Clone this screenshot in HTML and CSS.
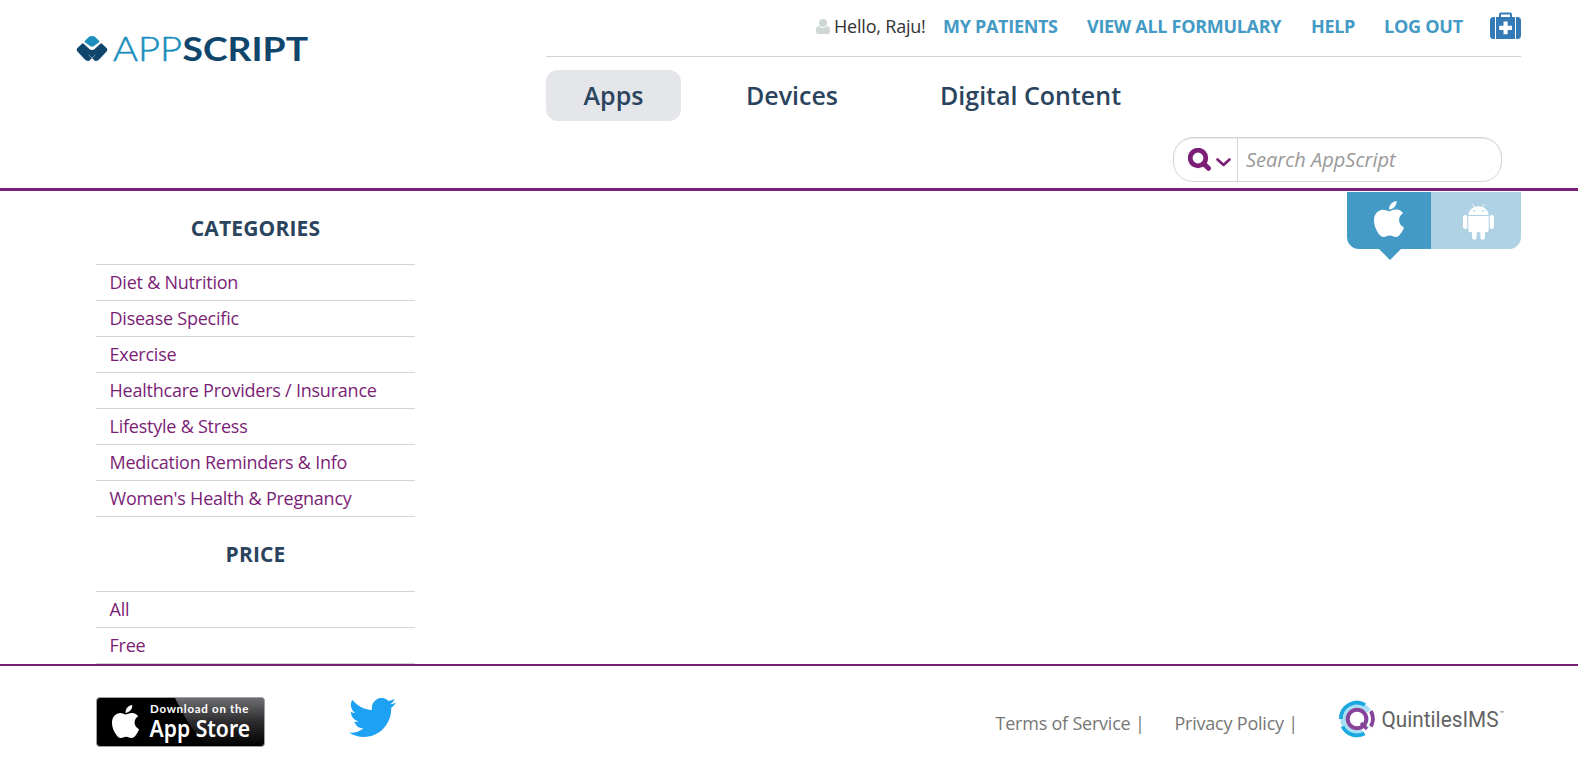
FILE: index.html
```html
<!DOCTYPE html>
<html lang="en">
<head>
<meta charset="utf-8">
<title>AppScript</title>
<link rel="stylesheet" href="styles.css">
</head>
<body>
<header class="header">
  <a class="logo">
    <svg width="240" height="50" viewBox="0 -10 240 50">
      <path fill="#1a8fbd" d="M12.300 3.600Q15 2.200 17.700 3.600L22 7.700q.7.800 0 1.500L17 13q-2 1.500-4 0L8 9.200q-.7-.7 0-1.500z"/>
      <path fill="#10466b" d="M5 10.700q.9-.7 1.700 0l5.600 5.300q2.700 2.200 5.400 0l5.600-5.300q.8-.7 1.700 0l4.800 4.500q1.300 1.500 0 3l-7.700 8.300q-1.500 1.500-4 1.500L15 25l-3.100 3q-2.500 0-4-1.500L.2 18.200q-1.300-1.500 0-3z"/>
      <path fill="none" stroke="#fff" stroke-width=".6" stroke-opacity=".7" d="M11.500 21.800l3.500 3.200 3.500-3.200"/>
      <text class="logo-light" x="36" y="28" textLength="69" lengthAdjust="spacingAndGlyphs">APP</text>
      <text class="logo-bold" x="105.500" y="28" textLength="125.500" lengthAdjust="spacingAndGlyphs">SCRIPT</text>
    </svg>
  </a>
  <div class="header-main">
    <nav class="top-nav">
      <span class="user"><svg width="14" height="15" viewBox="0 0 14 15"><path fill="#cfd6d6" d="M7 0a4 4 0 0 1 4 4 4 4 0 0 1-4 4 4 4 0 0 1-4-4 4 4 0 0 1 4-4zM2.600 7A6 6 0 0 0 7 8.900 6 6 0 0 0 11.400 7C13.500 7.200 14 9.500 14 12.200 14 14 13 15 11.600 15H2.400C1 15 0 14 0 12.200 0 9.500.5 7.200 2.600 7z"/></svg><span class="hello">Hello, Raju!</span></span>
      <a class="top-link patients">MY PATIENTS</a>
      <a class="top-link formulary">VIEW ALL FORMULARY</a>
      <a class="top-link help">HELP</a>
      <a class="top-link logout">LOG OUT</a>
      <svg class="medkit" width="31" height="27" viewBox="0 0 31 27"><path fill="#337ab7" fill-rule="evenodd" d="M6 5h3V2.500Q9 .5 11 .5h9q2 0 2 2V5h3v22H6zM11 5h9V2.500h-9zM13.500 9.500v4.200h-4.300v4.200h4.300v4.300h4.200v-4.300h4.300v-4.200h-4.300V9.500zM5 5v22H3.500Q0 27 0 23.500v-15Q0 5 3.500 5zM26 5h1.500Q31 5 31 8.500v15q0 3.500-3.500 3.500H26z"/></svg>
    </nav>
    <nav class="tabs">
      <a class="tab active">Apps</a>
      <a class="tab devices">Devices</a>
      <a class="tab digital">Digital Content</a>
    </nav>
    <div class="search">
      <div class="search-type">
        <svg width="44" height="24" viewBox="0 0 44 24"><g fill="none" stroke="#7b1e76"><circle cx="10" cy="10" r="7.800" stroke-width="4.800"/><path stroke-width="5" stroke-linecap="round" d="M16 16l4.500 4.300"/><path stroke-width="2.600" stroke-linecap="round" stroke-linejoin="round" d="M29.500 11.500L35.500 17l6-5.500"/></g></svg>
      </div>
      <div class="placeholder">Search AppScript</div>
    </div>
  </div>
</header>
<main class="main">
  <aside class="sidebar">
    <h2 class="heading">CATEGORIES</h2>
    <ul class="list">
      <li>Diet &amp; Nutrition</li>
      <li>Disease Specific</li>
      <li>Exercise</li>
      <li>Healthcare Providers / Insurance</li>
      <li>Lifestyle &amp; Stress</li>
      <li>Medication Reminders &amp; Info</li>
      <li>Women's Health &amp; Pregnancy</li>
    </ul>
    <h2 class="heading price">PRICE</h2>
    <ul class="list">
      <li>All</li>
      <li>Free</li>
    </ul>
  </aside>
  <div class="platforms">
    <div class="platform ios">
      <svg width="30" height="36" viewBox="4 32 376 448" preserveAspectRatio="none"><path fill="#fff" d="M318.700 268.700c-.2-36.700 16.400-64.400 50-84.800-18.800-26.900-47.200-41.700-84.700-44.600-35.500-2.800-74.300 20.700-88.500 20.700-15 0-49.400-19.700-76.400-19.700C63.300 141.200 4 184.800 4 273.500q0 39.300 14.400 81.200c12.800 36.700 59 126.700 107.200 125.200 25.200-.6 43-17.900 75.800-17.900 31.800 0 48.300 17.900 76.400 17.900 48.600-.7 90.400-82.500 102.600-119.300-65.200-30.700-61.700-90-61.700-91.900zm-56.600-164.200c27.300-32.400 24.800-61.900 24-72.500-24.100 1.400-52 16.400-67.900 34.900-17.500 19.800-27.800 44.300-25.600 71.900 26.100 2 49.900-11.400 69.500-34.300z"/></svg>
    </div>
    <div class="platform android">
      <svg width="31" height="36" viewBox="0 0 31 36"><g fill="#fff"><path fill-rule="evenodd" d="M5.300 11C5.500 7.500 7.700 4.700 11 3.200L9.200.3l.7-.3 1.900 2.900a12 12 0 0 1 7.400 0L21.100 0l.7.300L20 3.200c3.300 1.500 5.500 4.300 5.700 7.800zM10.800 6a.9.900 0 1 0 .01 0zM20.200 6a.9.900 0 1 0 .01 0z"/><path d="M5.300 12h20.400v14q0 2.200-2.200 2.200h-1.600v5.400a2.200 2.200 0 0 1-4.500 0v-5.400h-3.800v5.400a2.200 2.200 0 0 1-4.500 0v-5.400H7.500q-2.200 0-2.200-2.200z"/><rect y="11" width="4.300" height="14" rx="2.100"/><rect x="26.700" y="11" width="4.300" height="14" rx="2.100"/></g></svg>
    </div>
  </div>
</main>
<footer class="footer">
  <svg class="badge" width="169" height="50" viewBox="0 0 169 50">
    <defs><linearGradient id="gloss" x1="0" y1="0" x2="0" y2="1"><stop offset="0" stop-color="#6d6e71"/><stop offset=".5" stop-color="#2c2c2e"/><stop offset="1" stop-color="#000"/></linearGradient></defs>
    <rect x=".5" y=".5" width="168" height="49" rx="3.500" fill="#000"/>
    <path fill="url(#gloss)" d="M79 1h86q3 0 3 3v42q0 3-3 3h-54C95 33 87 17 79 1z"/>
    <rect x=".5" y=".5" width="168" height="49" rx="3.500" fill="none" stroke="#a0a1a3"/>
    <svg x="16" y="8" width="27" height="33" viewBox="4 32 376 448" preserveAspectRatio="none"><path fill="#fff" d="M318.700 268.700c-.2-36.700 16.400-64.400 50-84.800-18.800-26.900-47.200-41.700-84.700-44.600-35.500-2.800-74.300 20.700-88.500 20.700-15 0-49.400-19.700-76.400-19.700C63.300 141.200 4 184.800 4 273.500q0 39.300 14.400 81.200c12.800 36.700 59 126.700 107.200 125.200 25.200-.6 43-17.900 75.800-17.900 31.800 0 48.300 17.900 76.400 17.900 48.600-.7 90.400-82.500 102.600-119.300-65.200-30.700-61.700-90-61.700-91.900zm-56.600-164.200c27.300-32.400 24.800-61.900 24-72.500-24.100 1.400-52 16.400-67.900 34.900-17.500 19.800-27.800 44.300-25.600 71.900 26.100 2 49.900-11.400 69.500-34.300z"/></svg>
    <text class="badge-small" x="54" y="16" textLength="98.500">Download on the</text>
    <text class="badge-large" x="53.500" y="39.500" textLength="100.500" lengthAdjust="spacingAndGlyphs">App Store</text>
  </svg>
  <svg class="twitter" width="47" height="39" viewBox="0 2.250 24 19.550" preserveAspectRatio="none"><path fill="#1da1f2" d="M23.953 4.570a10 10 0 01-2.825.775 4.958 4.958 0 002.163-2.723c-.951.555-2.005.959-3.127 1.184a4.920 4.920 0 00-8.384 4.482C7.690 8.095 4.067 6.130 1.640 3.162a4.822 4.822 0 00-.666 2.475c0 1.710.870 3.213 2.188 4.096a4.904 4.904 0 01-2.228-.616v.060a4.923 4.923 0 003.946 4.827 4.996 4.996 0 01-2.212.085 4.936 4.936 0 004.604 3.417 9.867 9.867 0 01-6.102 2.105c-.390 0-.779-.023-1.170-.067a13.995 13.995 0 007.557 2.209c9.053 0 13.998-7.496 13.998-13.985 0-.210 0-.420-.015-.630A9.935 9.935 0 0024 4.590z"/></svg>
  <div class="legal">
    <a class="legal-link">Terms of Service |</a>
    <a class="legal-link privacy">Privacy Policy |</a>
    <svg class="quintiles" width="168" height="38" viewBox="0 0 168 38">
      <g fill="none">
        <circle cx="18" cy="18" r="14" stroke="#a9dff5" stroke-width="5.500"/>
        <path stroke="#fff" stroke-width="8" d="M24.500 31.500a15 15 0 0 0 5-5"/>
        <path stroke="#1ba8e0" stroke-width="3.800" d="M26 3.800A16.200 16.200 0 0 0 1.800 18M3.500 25.500A16.200 16.200 0 0 0 25.500 32.500"/>
        <path stroke="#fff" stroke-width="6" d="M30 10a14.500 14.500 0 0 1 0 16"/>
        <path stroke="#87439a" stroke-width="3.800" d="M31.900 10a16.600 16.600 0 0 1 0 15.500"/>
        <circle cx="18" cy="18" r="9.300" fill="#fff" stroke="#87439a" stroke-width="4"/>
        <path stroke="#87439a" stroke-width="3.200" d="M22 22l6 6"/>
      </g>
      <text class="q-text" x="42.500" y="26" textLength="117" lengthAdjust="spacingAndGlyphs">QuintilesIMS</text>
      <text class="q-tm" x="160.500" y="15">™</text>
    </svg>
  </div>
</footer>
</body>
</html>
```
FILE: styles.css
```css
* { box-sizing: border-box; }
body { margin: 0; background: #fff; font-family: "Open Sans", sans-serif; color: #333; height: 763px; overflow: hidden; }
.header { display: flex; height: 191px; border-bottom: 3px solid #7b1e76; }
.logo { display: block; width: 546px; padding: 23px 0 0 77px; }
.logo svg { display: block; overflow: visible; }
.logo-light { font: 300 33px Lato, sans-serif; fill: #1a8fbd; stroke: #1a8fbd; stroke-width: .5px; }
.logo-bold { font: 700 33px Lato, sans-serif; fill: #10466b; }
.header-main { width: 975px; display: flex; flex-direction: column; }
.top-nav { height: 57px; border-bottom: 1px solid #cfd6d6; display: flex; align-items: flex-start; white-space: nowrap; padding: 12px 0 0 270px; font-size: 18px; line-height: 29px; letter-spacing: -.3px; }
.user { display: flex; width: 127px; flex: none; letter-spacing: -.2px; }
.user svg { margin-top: 7px; flex: none; }
.hello { margin-left: 4px; }
.top-link { color: #429ac5; font-weight: 700; flex: none; }
.patients { width: 144px; }
.formulary { width: 224px; }
.help { width: 73px; }
.logout { width: 106px; letter-spacing: -.25px; }
.medkit { flex: none; }
.tabs { display: flex; padding-top: 13px; }
.tab { height: 51px; line-height: 51px; color: #2b445e; font-size: 25px; font-weight: 600; border-radius: 12px; white-space: nowrap; }
.active { width: 135px; background: #e4e6ea; text-align: center; }
.devices { margin-left: 65px; width: 194px; }
.search { width: 329px; height: 45px; margin: 16px 0 0 627px; border: 1px solid #cfd6d6; border-radius: 20px; display: flex; box-shadow: inset 0 1px 1px rgba(0,0,0,.075); }
.search-type { width: 64px; border-right: 1px solid #cfd6d6; padding: 10px 0 0 14px; }
.search-type svg { display: block; }
.placeholder { padding-left: 8px; font-size: 20px; line-height: 43px; font-style: italic; color: #999; }
.main { display: flex; justify-content: space-between; height: 473px; padding: 0 57px 0 96px; }
.sidebar { width: 319px; }
.heading { margin: 0; height: 73px; line-height: 75px; font-size: 21px; font-weight: 700; letter-spacing: .15px; color: #2b445e; text-align: center; }
.price { height: 74px; line-height: 75px; }
.list { list-style: none; margin: 0; padding: 0; border-top: 1px solid #cfd6d6; }
.list li { height: 36px; line-height: 34px; border-bottom: 1px solid #cfd6d6; padding-left: 13.5px; font-size: 18px; letter-spacing: -.23px; color: #7b1e76; white-space: nowrap; }
.platforms { display: flex; padding-top: 1px; height: 58px; }
.platform { height: 57px; padding-top: 9px; }
.platform svg { display: block; }
.ios { width: 84.5px; background: #429ac5; border-radius: 0 0 0 12px; padding-left: 27.5px; position: relative; }
.ios::after { content: ""; position: absolute; top: 57px; left: 32px; border: 11px solid transparent; border-top-color: #429ac5; border-bottom: 0; }
.android { width: 90px; background: #aed1e4; border-radius: 0 0 12px 0; padding: 12px 0 0 31.5px; }
.footer { display: flex; height: 99px; border-top: 2px solid #7b1e76; padding-left: 96px; background: #fff; }
.badge { margin-top: 31px; flex: none; }
.badge-small { font: 700 11.5px Lato, sans-serif; fill: #fff; }
.badge-large { font: 600 22.5px "Noto Sans", sans-serif; fill: #fff; }
.twitter { margin: 32px 0 0 84px; flex: none; }
.legal { display: flex; margin-left: 599.5px; padding-top: 34px; }
.legal-link { width: 179px; font-size: 18px; line-height: 46px; letter-spacing: -.22px; color: #777; white-space: nowrap; }
.privacy { width: 164px; }
.quintiles { margin-top: 1px; overflow: visible; }
.q-text { font: 400 22.500px Roboto, sans-serif; fill: #626264; }
.q-tm { font: 7px Roboto, sans-serif; fill: #4d4d4f; }
```
